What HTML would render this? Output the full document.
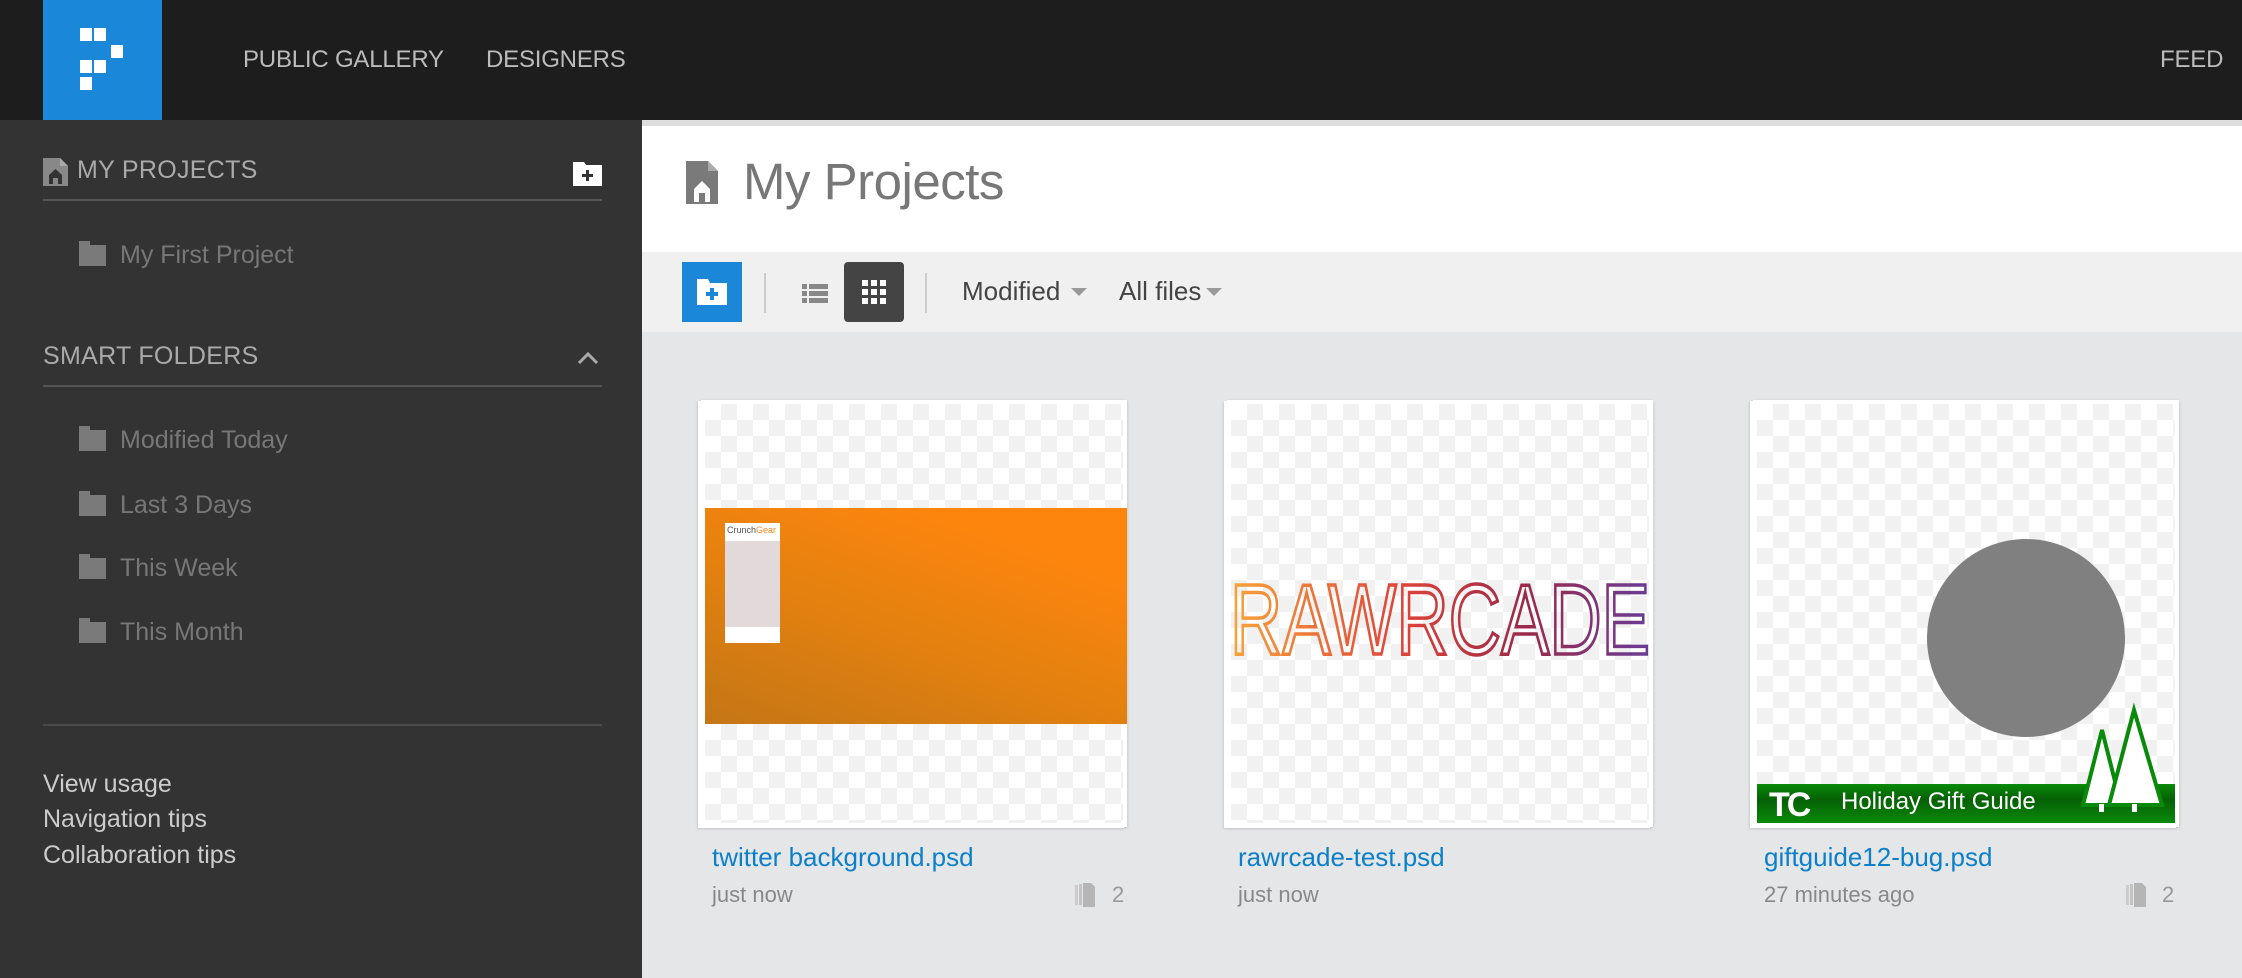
<!DOCTYPE html>
<html><head><meta charset="utf-8"><style>
*{margin:0;padding:0;box-sizing:border-box}
body{width:2242px;height:978px;overflow:hidden;font-family:"Liberation Sans",sans-serif;background:#e5e6e8;position:relative}
.a{position:absolute}
#hdr{left:0;top:0;width:2242px;height:120px;background:#1d1d1d}
#logo{left:43px;top:0;width:119px;height:120px;background:#1a87d9}
#logo i{position:absolute;background:#fff;width:12px;height:13px}
.nav{color:#bbb;font-size:24px;top:46px;letter-spacing:-0.2px}
#side{left:0;top:120px;width:642px;height:858px;background:#333}
.sh{color:#aaa;font-size:25px;letter-spacing:0.3px}
.line{height:2px;background:#555;left:43px;width:559px}
.it{color:#777;font-size:25px;left:120px}
.fo{left:79px;width:27px;height:21px;background:#7a7a7a}
.fo:before{content:"";position:absolute;left:0;top:-4px;width:11px;height:5px;background:#7a7a7a}
.lk{color:#ccc;font-size:25px;left:43px}
#main{left:642px;top:120px;width:1600px;height:132px;background:#fff;border-top:6px solid #ddd}
#tb{left:642px;top:252px;width:1600px;height:80px;background:#f0f0f0}
.card{width:426px;height:427px;background:#fff;box-shadow:-3px 1px 0 #fff,-4px 2px 2px #ccc,0 1px 3px #bbb}
.chk{position:absolute;left:4px;top:4px;right:4px;bottom:4px;background-color:#fff;background-image:linear-gradient(45deg,#f1f1f1 25%,transparent 25%,transparent 75%,#f1f1f1 75%),linear-gradient(45deg,#f1f1f1 25%,transparent 25%,transparent 75%,#f1f1f1 75%);background-size:32px 32px;background-position:0 0,16px 16px}
.fn{color:#0b80c9;font-size:26px;top:842px}
.tm{color:#888;font-size:22px;top:882px}
.cnt{color:#999;font-size:22px;top:882px}
.ci{width:20px;height:24px;top:883px}
</style></head><body>
<div id="hdr" class="a"></div>
<div id="logo" class="a">
<i style="left:37px;top:28px"></i><i style="left:51px;top:28px"></i><i style="left:68px;top:45px"></i>
<i style="left:37px;top:60px"></i><i style="left:51px;top:60px"></i><i style="left:37px;top:77px"></i>
</div>
<div class="a nav" style="left:243px">PUBLIC GALLERY</div>
<div class="a nav" style="left:486px">DESIGNERS</div>
<div class="a nav" style="left:2160px">FEED</div>

<div id="side" class="a"></div>
<svg class="a" style="left:43px;top:158px" width="25" height="28" viewBox="0 0 25 28"><path d="M0 0H17L25 8V28H0Z" fill="#888"/><path d="M17 0V8H25" fill="#aaa"/><path d="M6 26V17L12.5 11L19 17V26H15V20H10V26Z" fill="#333"/></svg>
<div class="a sh" style="left:77px;top:156px">MY PROJECTS</div>
<svg class="a" style="left:573px;top:162px" width="29" height="24" viewBox="0 0 29 24"><path d="M0 0H11L13 3H29V24H0Z" fill="#fff"/><path d="M13 8H16V12H20V15H16V19H13V15H9V12H13Z" fill="#333"/></svg>
<div class="a line" style="top:199px"></div>
<div class="a fo" style="top:245px"></div><div class="a it" style="top:241px">My First Project</div>
<div class="a sh" style="left:43px;top:342px">SMART FOLDERS</div>
<svg class="a" style="left:576px;top:350px" width="24" height="16"><path d="M3 13L12 4L21 13" stroke="#aaa" stroke-width="3" fill="none"/></svg>
<div class="a line" style="top:385px"></div>
<div class="a fo" style="top:430px"></div><div class="a it" style="top:426px">Modified Today</div>
<div class="a fo" style="top:495px"></div><div class="a it" style="top:491px">Last 3 Days</div>
<div class="a fo" style="top:558px"></div><div class="a it" style="top:554px">This Week</div>
<div class="a fo" style="top:622px"></div><div class="a it" style="top:618px">This Month</div>
<div class="a line" style="top:724px;background:#4a4a4a"></div>
<div class="a lk" style="top:770px">View usage</div>
<div class="a lk" style="top:805px">Navigation tips</div>
<div class="a lk" style="top:841px">Collaboration tips</div>

<div id="main" class="a"></div>
<svg class="a" style="left:686px;top:161px" width="32" height="43" viewBox="0 0 32 43"><path d="M0 0H22L32 10V43H0Z" fill="#7a7a7a"/><path d="M22 0V10H32" fill="#aaa"/><path d="M8 41V28L16 20L24 28V41H19V32H13V41Z" fill="#fff"/></svg>
<div class="a" style="left:743px;top:152px;font-size:51px;color:#777;letter-spacing:-0.5px">My Projects</div>
<div id="tb" class="a"></div>
<div class="a" style="left:682px;top:262px;width:60px;height:60px;background:#1a87d9"></div>
<svg class="a" style="left:697px;top:279px" width="30" height="26" viewBox="0 0 30 26"><path d="M0 0H11L13 4H30V26H0Z" fill="#fff"/><path d="M13 9H17V13H21V17H17V21H13V17H9V13H13Z" fill="#1a87d9"/></svg>
<div class="a" style="left:764px;top:273px;width:2px;height:40px;background:#ccc"></div>
<svg class="a" style="left:802px;top:284px" width="26" height="20"><g fill="#888"><rect x="0" y="0" width="5" height="5"/><rect x="7" y="0" width="19" height="5"/><rect x="0" y="7" width="5" height="5"/><rect x="7" y="7" width="19" height="5"/><rect x="0" y="14" width="5" height="5"/><rect x="7" y="14" width="19" height="5"/></g></svg>
<div class="a" style="left:844px;top:262px;width:60px;height:60px;background:#444;border-radius:4px"></div>
<svg class="a" style="left:862px;top:280px" width="24" height="24"><g fill="#fff"><rect x="0" y="0" width="6" height="6"/><rect x="9" y="0" width="6" height="6"/><rect x="18" y="0" width="6" height="6"/><rect x="0" y="9" width="6" height="6"/><rect x="9" y="9" width="6" height="6"/><rect x="18" y="9" width="6" height="6"/><rect x="0" y="18" width="6" height="6"/><rect x="9" y="18" width="6" height="6"/><rect x="18" y="18" width="6" height="6"/></g></svg>
<div class="a" style="left:925px;top:273px;width:2px;height:40px;background:#ccc"></div>
<div class="a" style="left:962px;top:276px;font-size:26px;color:#444">Modified</div>
<svg class="a" style="left:1071px;top:288px" width="16" height="10"><path d="M0 0H16L8 8Z" fill="#999"/></svg>
<div class="a" style="left:1119px;top:276px;font-size:26px;color:#444">All files</div>
<svg class="a" style="left:1206px;top:288px" width="16" height="10"><path d="M0 0H16L8 8Z" fill="#999"/></svg>

<!-- card1 -->
<div class="a card" style="left:701px;top:400px"><div class="chk"></div>
<div class="a" style="left:4px;top:108px;width:422px;height:216px;background:linear-gradient(20deg,#c47616 0%,#e4810f 45%,#fd850e 80%)"></div>
<div class="a" style="left:24px;top:123px;width:55px;height:120px;background:#e2dada;border-radius:2px">
<div style="background:#fff;height:18px;font-size:9px;color:#555;padding:2px">Crunch<span style="color:#f7861e">Gear</span></div>
<div style="position:absolute;bottom:0;left:0;right:0;height:16px;background:#fff"></div></div>
</div>
<div class="a fn" style="left:712px">twitter background.psd</div>
<div class="a tm" style="left:712px">just now</div>
<svg class="a ci" style="left:1075px"><rect x="0" y="2" width="3" height="20" fill="#ccc"/><rect x="4" y="1" width="3" height="21" fill="#c4c4c4"/><path d="M8 0H16L20 4V24H8Z" fill="#b5b5b5"/></svg><div class="a cnt" style="left:1112px">2</div>

<!-- card2 -->
<div class="a card" style="left:1227px;top:400px"><div class="chk"></div>
<svg class="a" style="left:3px;top:170px" width="422" height="90" viewBox="0 0 422 90"><defs><linearGradient id="g" x1="0" x2="1"><stop offset="0" stop-color="#f7a43a"/><stop offset="0.4" stop-color="#e0443a"/><stop offset="0.7" stop-color="#9b2a4a"/><stop offset="1" stop-color="#6a3c96"/></linearGradient></defs>
<text x="0" y="84" font-family="Liberation Sans, sans-serif" font-size="100" textLength="420" lengthAdjust="spacingAndGlyphs" fill="none" stroke="url(#g)" stroke-width="3.5">RAWRCADE</text></svg>
</div>
<div class="a fn" style="left:1238px">rawrcade-test.psd</div>
<div class="a tm" style="left:1238px">just now</div>

<!-- card3 -->
<div class="a card" style="left:1753px;top:400px"><div class="chk"></div>
<div class="a" style="left:174px;top:139px;width:198px;height:198px;border-radius:50%;background:#808080"></div>
<div class="a" style="left:4px;top:384px;width:418px;height:39px;background:linear-gradient(#0a8a0a,#056005 40%,#0a8a0a)"></div>
<div class="a" style="left:88px;top:388px;font-size:24px;color:#fff">Holiday Gift Guide</div>
<div class="a" style="left:16px;top:389px;width:64px;height:32px;font-weight:bold;font-size:34px;color:#fff;line-height:32px;letter-spacing:-3px">TC</div>
<svg class="a" style="left:0;top:0" width="426" height="427"><path d="M330 405L349 330L368 405Z" fill="#fff" stroke="#0a8a0a" stroke-width="4"/><path d="M356 405L381 310L409 405Z" fill="#fff" stroke="#0a8a0a" stroke-width="4"/><rect x="346" y="404" width="5" height="8" fill="#fff"/><rect x="379" y="404" width="5" height="8" fill="#fff"/></svg>
</div>
<div class="a fn" style="left:1764px">giftguide12-bug.psd</div>
<div class="a tm" style="left:1764px">27 minutes ago</div>
<svg class="a ci" style="left:2126px"><rect x="0" y="2" width="3" height="20" fill="#ccc"/><rect x="4" y="1" width="3" height="21" fill="#c4c4c4"/><path d="M8 0H16L20 4V24H8Z" fill="#b5b5b5"/></svg><div class="a cnt" style="left:2162px">2</div>
</body></html>
